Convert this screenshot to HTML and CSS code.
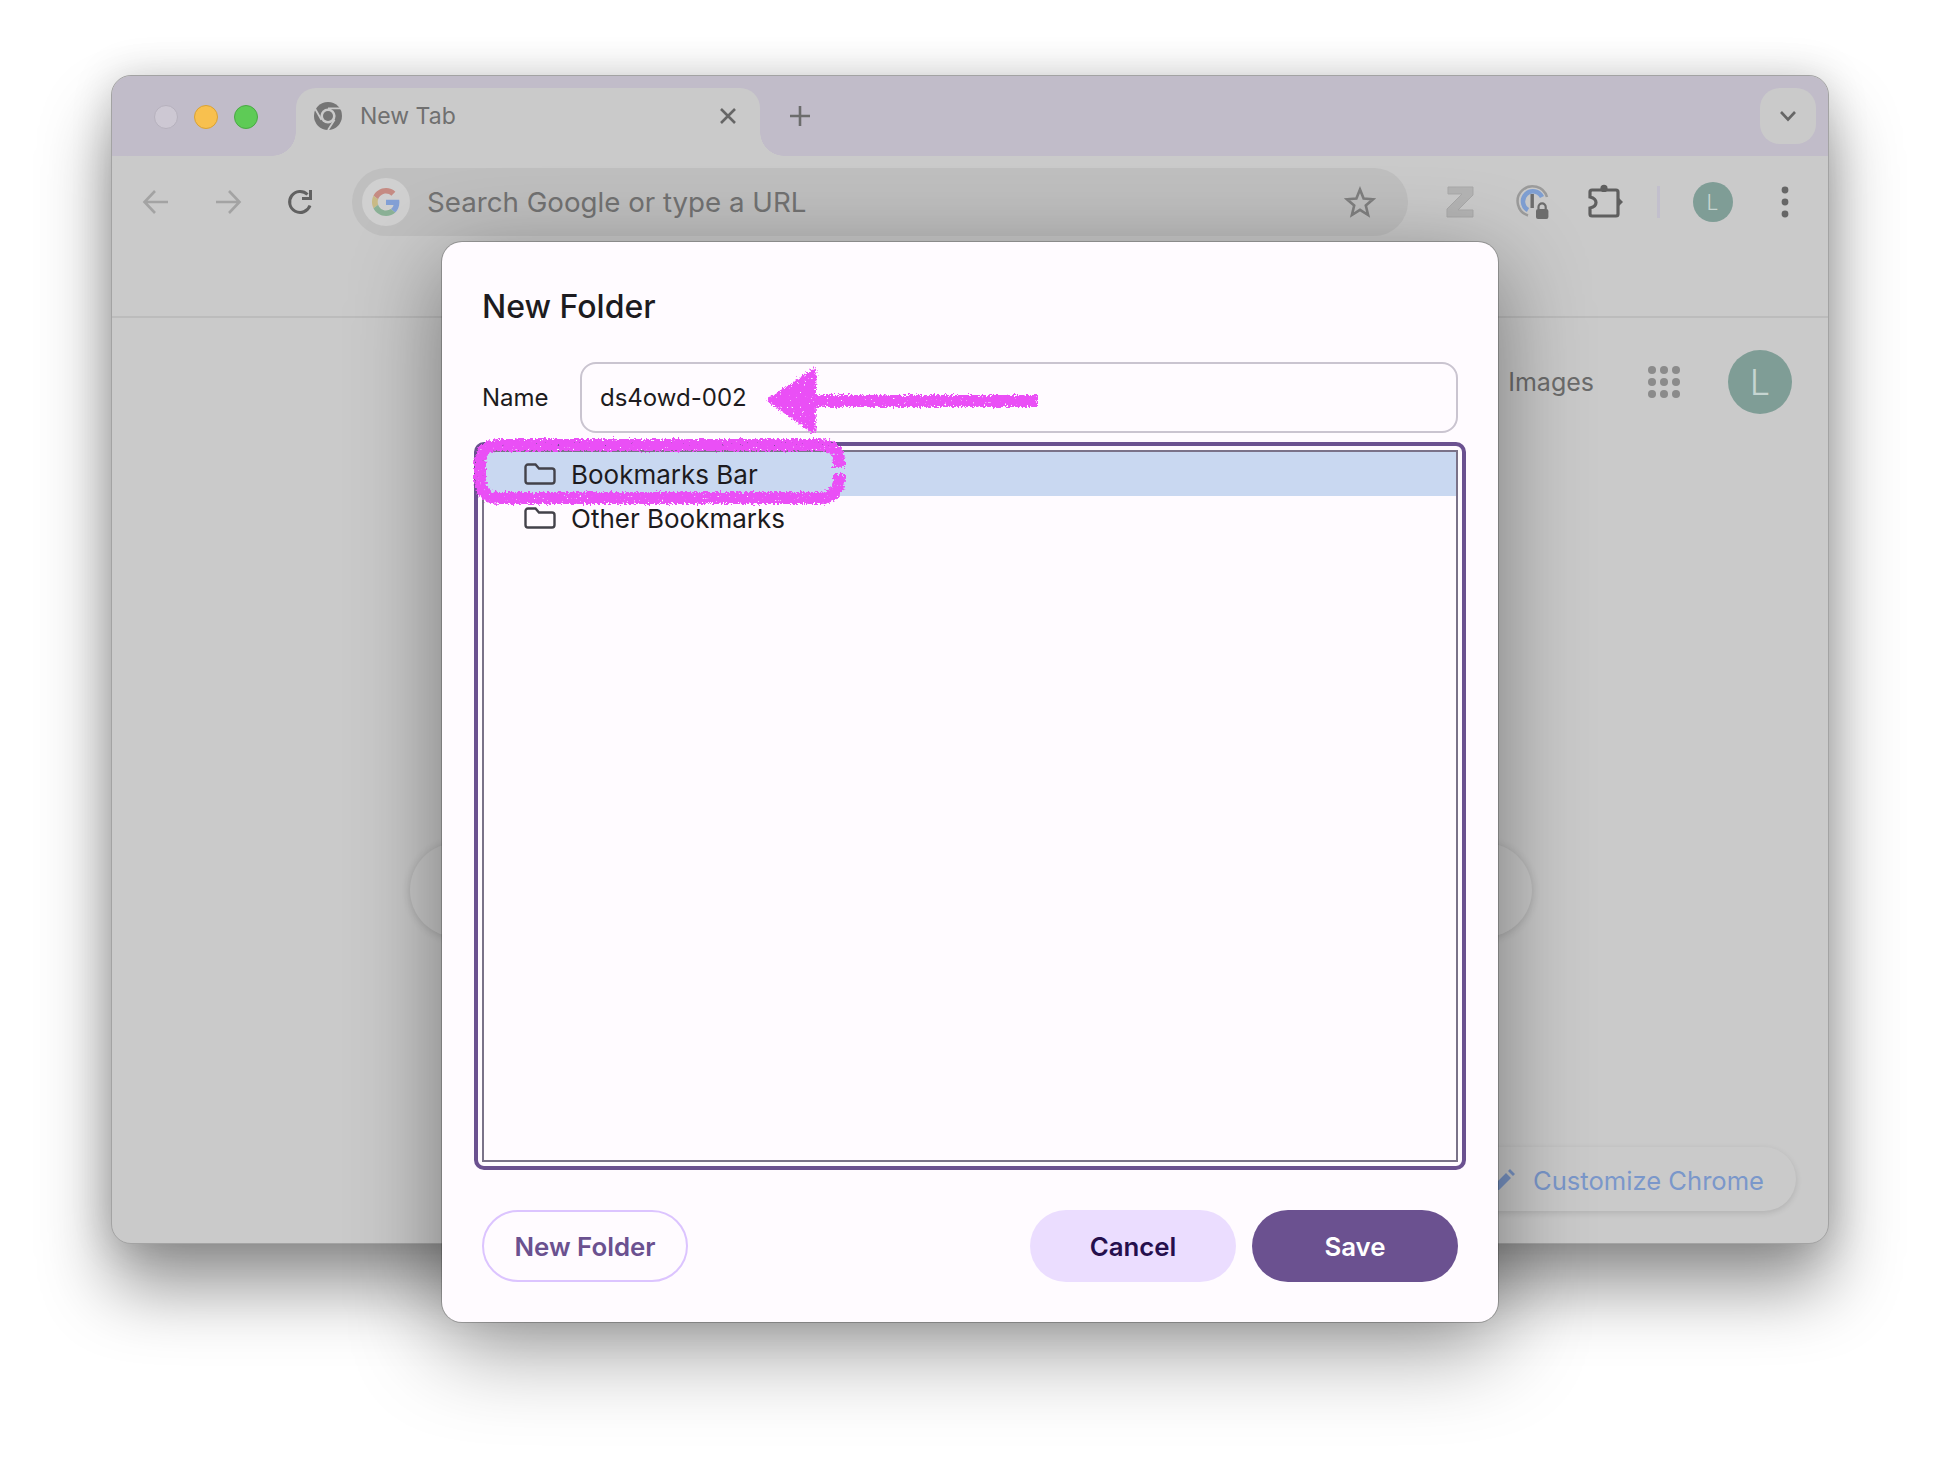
FILE: index.html
```html
<!DOCTYPE html>
<html lang="en">
<head>
<meta charset="utf-8">
<title>New Folder</title>
<link rel="stylesheet" href="styles.css">
</head>
<body>
<div class="desktop">
  <section class="window">
    <div class="tabstrip">
      <div class="lights">
        <span class="light light-off"></span>
        <span class="light light-min"></span>
        <span class="light light-max"></span>
      </div>
      <div class="tab">
        <svg class="tab-icon" width="28" height="28" viewBox="0 0 28 28">
          <circle cx="14" cy="14" r="14" fill="#757575"/>
          <circle cx="14" cy="14" r="7.6" fill="#cacaca"/>
          <circle cx="14" cy="14" r="5" fill="#757575"/>
          <path d="M14 6.4H27M7.4 17.8L1 6.5M20.6 17.8L14 28" stroke="#cacaca" stroke-width="1.8" fill="none"/>
        </svg>
        <span class="tab-title">New Tab</span>
        <svg class="tab-close" width="20" height="20" viewBox="0 0 20 20"><path d="M3 3L17 17M17 3L3 17" stroke="#666" stroke-width="2.6"/></svg>
      </div>
      <svg class="new-tab" width="22" height="22" viewBox="0 0 22 22"><path d="M11 1V21M1 11H21" stroke="#6c6c6c" stroke-width="2.6"/></svg>
      <div class="tab-search">
        <svg width="18" height="12" viewBox="0 0 18 12"><path d="M2 2L9 9.5L16 2" stroke="#666" stroke-width="2.6" fill="none"/></svg>
      </div>
    </div>
    <header class="chrome">
      <div class="toolbar">
        <svg class="tool" width="32" height="32" viewBox="0 0 32 32"><path d="M28 16H5M15 5L4.5 16L15 27" stroke="#a3a3a3" stroke-width="2.6" fill="none"/></svg>
        <svg class="tool" width="32" height="32" viewBox="0 0 32 32"><path d="M4 16H27M17 5L27.5 16L17 27" stroke="#a3a3a3" stroke-width="2.6" fill="none"/></svg>
        <svg class="tool" width="32" height="32" viewBox="0 0 32 32"><path d="M26 19.5A10.5 10.5 0 1 1 23.5 8.5" stroke="#616161" stroke-width="3" fill="none"/><path d="M26.5 4V12.5H18" stroke="#616161" stroke-width="3" fill="none"/></svg>
        <div class="omnibox">
          <span class="g-badge">
            <svg width="28" height="28" viewBox="0 0 48 48">
              <path fill="#c58b83" d="M24 9.5c3.54 0 6.71 1.22 9.21 3.6l6.85-6.85C35.9 2.38 30.47 0 24 0 14.62 0 6.51 5.38 2.56 13.22l7.98 6.19C12.43 13.72 17.74 9.5 24 9.5z"/>
              <path fill="#83a0d6" d="M46.98 24.55c0-1.57-.15-3.09-.38-4.55H24v9.02h12.94c-.58 2.96-2.26 5.48-4.78 7.18l7.73 6c4.51-4.18 7.09-10.36 7.09-17.65z"/>
              <path fill="#c9ba85" d="M10.53 28.59c-.48-1.45-.76-2.99-.76-4.59s.27-3.14.76-4.59l-7.98-6.19C.92 16.46 0 20.12 0 24c0 3.88.92 7.54 2.56 10.78l7.97-6.19z"/>
              <path fill="#8bb196" d="M24 48c6.48 0 11.93-2.13 15.89-5.81l-7.73-6c-2.15 1.45-4.92 2.3-8.16 2.3-6.26 0-11.57-4.22-13.47-9.91l-7.98 6.19C6.51 42.62 14.62 48 24 48z"/>
            </svg>
          </span>
          <span class="omni-text">Search Google or type a URL</span>
          <svg class="omni-star" width="32" height="32" viewBox="0 0 32 32"><path d="M16 3.5L19.6 12.6L29 13.3L21.8 19.5L24.1 29L16 23.8L7.9 29L10.2 19.5L3 13.3L12.4 12.6Z" stroke="#7f7f7f" stroke-width="2.6" stroke-linejoin="miter" fill="none"/></svg>
        </div>
        <div class="actions">
          <svg class="action action-z" width="32" height="36" viewBox="0 0 32 36"><path d="M4 3H29V11L14 26H29V33H3V25L18 10H4Z" fill="#b4b4b4" stroke="#a9a9a9" stroke-width="1"/></svg>
          <svg class="action" width="36" height="36" viewBox="0 0 36 36">
            <path d="M13 31.5A15 15 0 1 1 32 13" stroke="#9b9b9b" stroke-width="2.5" fill="none"/>
            <path d="M13 26A10 10 0 1 1 27 13" stroke="#7f9fd2" stroke-width="4.5" fill="none"/>
            <rect x="15.5" y="10" width="3.4" height="14" fill="#6d6d6d"/>
            <path d="M23.5 25V23a3.6 3.6 0 0 1 7.2 0V25" stroke="#6d6d6d" stroke-width="2.2" fill="none"/>
            <rect x="21" y="25" width="12.4" height="10" rx="2" fill="#6d6d6d"/>
          </svg>
          <svg class="action" width="36" height="36" viewBox="0 0 36 36">
            <circle cx="17" cy="4.4" r="3.6" fill="#5f5f5f"/>
            <path d="M32 14L36 18L32 22Z" fill="#5f5f5f"/>
            <path d="M5 6H29A2 2 0 0 1 31 8V30A2 2 0 0 1 29 32H5A2 2 0 0 1 3 30V24C8 23 9 21 9 18.5C9 16 7 14 3 13V8A2 2 0 0 1 5 6Z" stroke="#5f5f5f" stroke-width="3.2" fill="none"/>
          </svg>
          <span class="tool-sep"></span>
          <span class="avatar avatar-small">L</span>
          <svg class="tool-menu" width="10" height="32" viewBox="0 0 10 32"><circle cx="5" cy="4" r="3.4" fill="#666"/><circle cx="5" cy="16" r="3.4" fill="#666"/><circle cx="5" cy="28" r="3.4" fill="#666"/></svg>
        </div>
      </div>
      <div class="bookmarks-bar"></div>
    </header>
    <main class="ntp">
      <div class="ntp-top">
        <span class="ntp-link">Images</span>
        <svg class="apps" width="32" height="32" viewBox="0 0 32 32" fill="#8b8b8b">
          <circle cx="4" cy="4" r="4"/><circle cx="16" cy="4" r="4"/><circle cx="28" cy="4" r="4"/>
          <circle cx="4" cy="16" r="4"/><circle cx="16" cy="16" r="4"/><circle cx="28" cy="16" r="4"/>
          <circle cx="4" cy="28" r="4"/><circle cx="16" cy="28" r="4"/><circle cx="28" cy="28" r="4"/>
        </svg>
        <span class="avatar avatar-large">L</span>
      </div>
      <div class="ntp-search"></div>
      <div class="customize">
        <svg width="24" height="24" viewBox="0 0 24 24"><path d="M3 21V16L15 4L20 9L8 21ZM17 2L19 0L24 5L22 7Z" fill="#7a95c6"/></svg>
        <span>Customize Chrome</span>
      </div>
    </main>
  </section>

  <section class="dialog">
    <h1 class="dialog-title">New Folder</h1>
    <div class="name-row">
      <label class="name-label">Name</label>
      <div class="name-input">ds4owd-002</div>
    </div>
    <div class="tree-frame">
      <ul class="tree">
        <li class="tree-row tree-row-selected">
          <svg width="32" height="22" viewBox="0 0 32 22"><path d="M1.5 4A2.5 2.5 0 0 1 4 1.5H11.5L15 5.5H28A2.5 2.5 0 0 1 30.5 8V18A2.5 2.5 0 0 1 28 20.5H4A2.5 2.5 0 0 1 1.5 18Z" stroke="#43424a" stroke-width="2.4" fill="none"/></svg>
          <span>Bookmarks Bar</span>
        </li>
        <li class="tree-row">
          <svg width="32" height="22" viewBox="0 0 32 22"><path d="M1.5 4A2.5 2.5 0 0 1 4 1.5H11.5L15 5.5H28A2.5 2.5 0 0 1 30.5 8V18A2.5 2.5 0 0 1 28 20.5H4A2.5 2.5 0 0 1 1.5 18Z" stroke="#43424a" stroke-width="2.4" fill="none"/></svg>
          <span>Other Bookmarks</span>
        </li>
      </ul>
    </div>
    <div class="dialog-actions">
      <button class="btn btn-outline">New Folder</button>
      <div class="btn-group">
        <button class="btn btn-tonal">Cancel</button>
        <button class="btn btn-filled">Save</button>
      </div>
    </div>
  </section>

  <svg class="scribble" width="1940" height="1470" viewBox="0 0 1940 1470">
    <defs>
      <filter id="crayon" x="-5%" y="-20%" width="110%" height="140%">
        <feTurbulence type="fractalNoise" baseFrequency="0.45" numOctaves="3" seed="4" result="n"/>
        <feDisplacementMap in="SourceGraphic" in2="n" scale="7" xChannelSelector="R" yChannelSelector="G" result="d"/>
        <feColorMatrix in="n" type="matrix" values="0 0 0 0 0 0 0 0 0 0 0 0 0 0 0 0 0 0 -9 7.4" result="holes"/>
        <feComposite in="d" in2="holes" operator="in"/>
      </filter>
    </defs>
    <g filter="url(#crayon)" fill="#ea50f6" stroke="#ea50f6">
      <path d="M770 400L814 371L813 431Z" stroke-width="5" stroke-linejoin="round"/>
      <path d="M815 401H1038" stroke-width="12" fill="none"/>
      <path d="M839 467V463Q839 445 820 445H498Q480 445 480 465V478Q480 498 498 498H820Q839 498 839 478V474" stroke-width="12" fill="none"/>
    </g>
  </svg>
</div>
</body>
</html>
```

FILE: styles.css
```css
* { box-sizing: border-box; }
html, body { margin: 0; padding: 0; background: #fff; }
body { font-family: "Inter", "Liberation Sans", sans-serif; }

.desktop { position: relative; width: 1940px; height: 1470px; overflow: hidden; background: #fff; }

/* browser window behind the dialog */
.window {
  position: absolute; left: 111px; top: 75px; width: 1718px; height: 1169px;
  display: flex; flex-direction: column;
  background: #cacaca; border-radius: 20px;
  border: 1px solid #a3a3a3;
  box-shadow: 0 44px 70px rgba(0,0,0,.42), 0 0 40px rgba(0,0,0,.16);
  overflow: hidden;
}
.tabstrip {
  flex: 0 0 80px; display: flex; align-items: flex-start;
  padding: 12px 12px 0 42px; background: #c1bcc9;
}
.lights { display: flex; gap: 16px; margin-top: 17px; margin-right: 38px; }
.light { width: 24px; height: 24px; border-radius: 50%; border: 1px solid; }
.light-off { background: #cdc8d3; border-color: #b6b1bd; }
.light-min { background: #f8c04e; border-color: #d9a234; }
.light-max { background: #5ecb56; border-color: #4aa845; }

.tab {
  position: relative; width: 464px; height: 68px; display: flex; align-items: center;
  padding: 0 22px 12px 18px; margin-top: 0;
  background: #cacaca; border-radius: 20px 20px 0 0;
}
.tab::before, .tab::after { content: ""; position: absolute; bottom: 0; width: 24px; height: 24px; }
.tab::before { left: -24px; background: radial-gradient(circle at 0 0, transparent 23.5px, #cacaca 24px); }
.tab::after { right: -24px; background: radial-gradient(circle at 100% 0, transparent 23.5px, #cacaca 24px); }
.tab-icon { flex: none; }
.tab-title { flex: 1; margin-left: 18px; font-size: 23px; color: #707070; }
.tab-close { flex: none; }
.new-tab { flex: none; margin: 17px 0 0 29px; }
.tab-search {
  margin-left: auto; width: 56px; height: 56px; border-radius: 20px; background: #cacaca;
  display: flex; align-items: center; justify-content: center;
}

.chrome { flex: 0 0 162px; display: flex; flex-direction: column; border-bottom: 2px solid #bcbcbc; background: #cacaca; border-radius: 16px 16px 0 0; }
.toolbar { display: flex; align-items: center; height: 92px; padding: 0 0 0 28px; }
.tool { flex: none; margin-right: 40px; }
.tool:nth-child(3) { margin-right: 36px; }
.omnibox {
  flex: none; width: 1056px; height: 68px; border-radius: 34px; background: #bfbfbf;
  display: flex; align-items: center; padding: 0 32px 0 10px;
}
.g-badge { width: 48px; height: 48px; border-radius: 50%; background: #d0d0d0; display: flex; align-items: center; justify-content: center; flex: none; }
.omni-text { flex: 1; margin-left: 17px; font-size: 27.7px; color: #727272; }
.omni-star { flex: none; }
.actions { flex: 1; display: flex; align-items: center; padding-left: 36px; }
.action { flex: none; margin-right: 36px; }
.action-z { margin-right: 38.5px; }
.tool-sep { width: 3px; height: 32px; background: #c2bfcd; margin-left: -2px; margin-right: 33px; }
.avatar { display: flex; align-items: center; justify-content: center; border-radius: 50%; background: #7f9d96; color: #c6d5d1; font-weight: 300; flex: none; }
.avatar-small { width: 40px; height: 40px; font-size: 21px; }
.tool-menu { flex: none; margin-left: 47px; }
.bookmarks-bar { flex: 1; }

/* new tab page */
.ntp { flex: 1; display: flex; flex-direction: column; padding: 32px 32px 32px 298px; }
.ntp-top { display: flex; align-items: center; justify-content: flex-end; padding-right: 4px; height: 64px; }
.ntp-link { font-size: 25px; color: #6c6c6c; }
.apps { margin: 0 48px 0 54px; }
.avatar-large { width: 64px; height: 64px; font-size: 36px; }
.ntp-search { width: 1122px; height: 94px; border-radius: 47px; margin-top: 429px; background: #cacaca; box-shadow: 0 1px 8px rgba(0,0,0,.16); }
.customize {
  align-self: flex-end; margin-top: auto; margin-right: 0; height: 64px; width: 340px;
  display: flex; align-items: center; gap: 18px; padding: 3px 0 0 35px;
  border-radius: 32px; background: #cacaca; box-shadow: 0 2px 6px rgba(0,0,0,.12);
  font-size: 25.6px; color: #7a97ca;
}

/* dialog */
.dialog {
  position: absolute; left: 442px; top: 242px; width: 1056px; height: 1080px;
  padding: 49px 40px 40px;
  display: flex; flex-direction: column;
  background: #fffbff; border-radius: 20px; border: 0;
  box-shadow: 0 0 0 1px rgba(0,0,0,.22), 0 24px 90px rgba(0,0,0,.42);
}
.dialog-title { margin: 0; height: 32px; font-size: 32px; line-height: 32px; font-weight: 500; color: #1d1b20; }
.name-row { display: flex; align-items: center; margin-top: 39px; height: 71px; }
.name-label { width: 98px; font-size: 24px; color: #1d1b20; }
.name-input {
  flex: 1; height: 71px; padding: 0 18px; display: flex; align-items: center;
  border: 2px solid #cac4d0; border-radius: 16px; font-size: 24px; color: #1d1b20;
}
.tree-frame {
  margin: 9px -8px 0; height: 728px; padding: 4px;
  border: 4px solid #6b5190; border-radius: 10px;
}
.tree {
  list-style: none; margin: 0; padding: 0; height: 100%;
  border: 2px solid #7a7289;
}
.tree-row { display: flex; align-items: center; gap: 15px; height: 44px; padding-left: 40px; font-size: 26px; color: #1d1b20; }
.tree-row-selected { background: #c9d8f1; }
.dialog-actions { display: flex; justify-content: space-between; margin-top: 40px; }
.btn-group { display: flex; gap: 16px; }
.btn {
  width: 206px; height: 72px; border-radius: 36px; border: 0;
  font-family: inherit; font-size: 25.8px; font-weight: 600;
}
.btn-outline { background: transparent; border: 2px solid #dcc4ff; color: #6b5190; }
.btn-tonal { background: #ebddff; color: #250f4d; }
.btn-filled { background: #6b5190; color: #fff; }

/* hand-drawn annotation above the screenshot */
.scribble { position: absolute; left: 0; top: 0; pointer-events: none; }
```
